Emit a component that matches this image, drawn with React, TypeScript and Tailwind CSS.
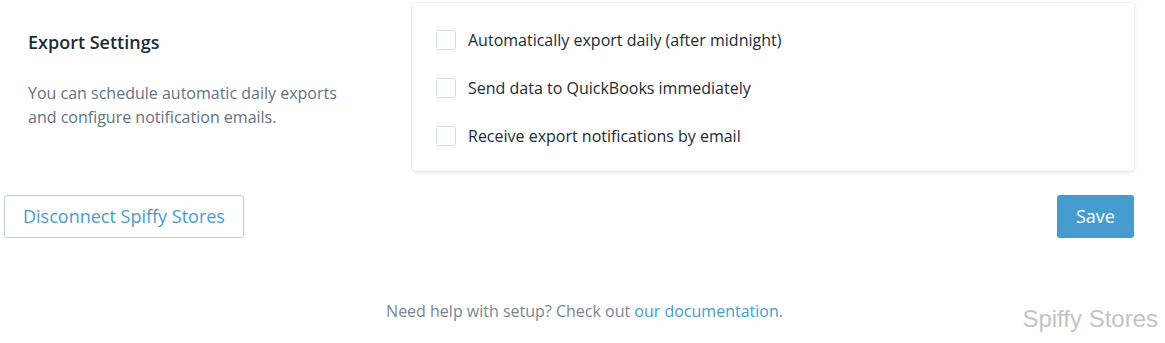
import React, { useState } from 'react';

const options = [
  'Automatically export daily (after midnight)',
  'Send data to QuickBooks immediately',
  'Receive export notifications by email',
];

const App = () => {
  const [checked, setChecked] = useState<boolean[]>([false, false, false]);

  const toggle = (i: number) => {
    setChecked((prev) => prev.map((v, idx) => (idx === i ? !v : v)));
  };

  return (
    <div
      className="w-[1165px] h-[343px] bg-white relative"
      style={{ fontFamily: '"Open Sans", "Noto Sans", sans-serif' }}
    >
      <div className="w-[1130px] ml-[4px] pt-[3px]">
        {/* Export settings section */}
        <div className="flex">
          <div className="w-[408px] pl-[24px] pt-[27px]">
            <h2 className="text-[18px] font-semibold text-[#212b36] leading-[24px]">Export Settings</h2>
            <p className="mt-[27px] text-[16px] leading-[24px] text-[#637381] w-[330px]">
              You can schedule automatic daily exports and configure notification emails.
            </p>
          </div>
          <div className="flex-1 bg-white rounded-[4px] shadow-[0_0_0_1px_rgba(63,63,68,0.04),0_1px_4px_0_rgba(63,63,68,0.15)] pl-[24px] pt-[25px] pb-[23px]">
            {options.map((opt, i) => (
              <label key={opt} className="flex items-center h-[24px] mb-[24px] last:mb-0 cursor-pointer">
                <input
                  type="checkbox"
                  checked={checked[i]}
                  onChange={() => toggle(i)}
                  className="appearance-none shrink-0 w-[20px] h-[20px] border border-[#d3dbe2] rounded-[3px] bg-white mr-[12px]"
                />
                <span className="text-[16px] leading-[24px] text-[#212b36]">{opt}</span>
              </label>
            ))}
          </div>
        </div>

        {/* Actions */}
        <div className="flex justify-between mt-[24px]">
          <button className="h-[43px] px-[18px] border border-[#c4cdd5] rounded-[3px] text-[18px] text-[#479ccf] bg-white">
            Disconnect Spiffy Stores
          </button>
          <button className="h-[43px] w-[77px] rounded-[3px] text-[18px] text-white bg-[#479ccf]">
            Save
          </button>
        </div>
      </div>

      {/* Footer */}
      <p className="mt-[61px] pl-[4px] text-center text-[16px] text-[#7a8692] leading-[24px]">
        Need help with setup? Check out <a className="text-[#479ccf]">our documentation</a>.
      </p>

      <div
        className="absolute right-[7px] bottom-[12px] text-[24px] text-[#c4c4c4] leading-none"
        style={{ fontFamily: '"Liberation Sans", Arial, sans-serif' }}
      >
        Spiffy Stores
      </div>
    </div>
  );
};

export default App;
